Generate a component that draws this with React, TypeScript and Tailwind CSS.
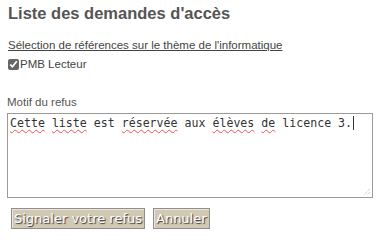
import React from 'react';

const Misspelled: React.FC<{ children: React.ReactNode }> = ({ children }) => (
  <span className="underline decoration-wavy decoration-[#e55] decoration-[1px] underline-offset-[2px]">{children}</span>
);

const btn =
  'h-[21px] px-[2px] border border-[#8f8f8f] shadow-[inset_1px_1px_0_#ece6da] bg-[#d2c9b5] font-["DejaVu_Sans",sans-serif] text-[13px] leading-[16px] text-white [text-shadow:1px_1px_1px_#333]';

const App: React.FC = () => {
  return (
    <div className="w-[381px] h-[245px] bg-white font-['Liberation_Sans',Arial,sans-serif] text-[#555] px-[8px] pt-[3px]">
      <h1 className="text-[16.5px] font-bold text-[#555] leading-[20px]">
        Liste des demandes d'accès
      </h1>

      <div className="mt-[15px] text-[11.5px] leading-[14px] underline text-[#444]">
        Sélection de références sur le thème de l'informatique
      </div>

      <label className="mt-[5px] flex items-center text-[11.5px] leading-[14px] text-[#444]">
        <input type="checkbox" defaultChecked className="m-0 w-[11px] h-[11px] accent-[#666]" />
        <span className="ml-[1px]">PMB Lecteur</span>
      </label>

      <div className="mt-[24px] -ml-[1px] text-[11.5px] leading-[14px] text-[#555]">Motif du refus</div>

      {/* Textarea look-alike, keeps spell-check marks */}
      <div className="relative mt-[4px] -ml-[1px] w-[366px] h-[85px] border border-[#9a9a9a] bg-white px-[2px] py-[2px] font-['DejaVu_Sans_Mono',monospace] text-[11.6px] leading-[14px] text-[#333]">
        <Misspelled>Cette</Misspelled> <Misspelled>liste</Misspelled> est <Misspelled>réservée</Misspelled> aux{' '}
        <Misspelled>élèves</Misspelled> <Misspelled>de</Misspelled> licence 3.
        <span className="inline-block w-[1px] h-[14px] bg-[#333] align-top ml-[1px]" />
        <svg className="absolute right-[1px] bottom-[1px]" width="8" height="8" viewBox="0 0 8 8">
          <path d="M7 1 L1 7 M7 4 L4 7" stroke="#bbb" strokeWidth="1" strokeDasharray="1 1" />
        </svg>
      </div>

      {/* Buttons */}
      <div className="mt-[10px] ml-[3px] flex gap-[8px]">
        <button className={btn}>Signaler votre refus</button>
        <button className={btn}>Annuler</button>
      </div>
    </div>
  );
};

export default App;
